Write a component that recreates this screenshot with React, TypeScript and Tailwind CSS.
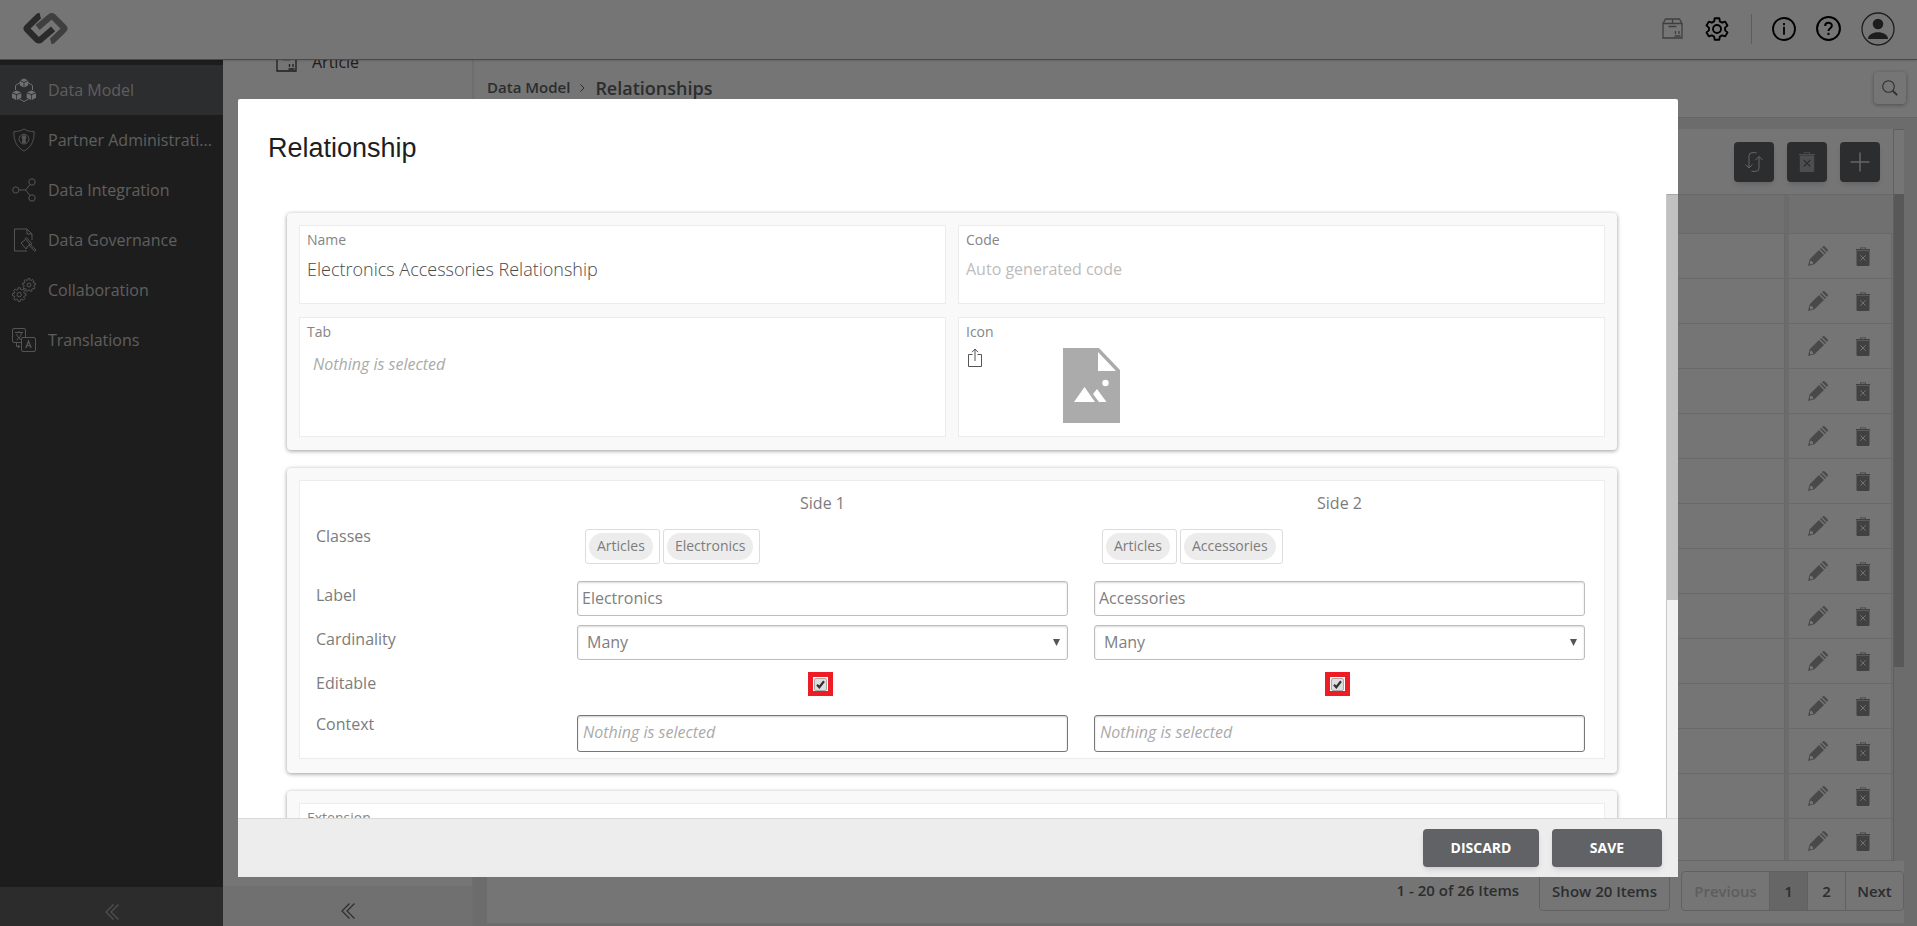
import type { ReactNode } from "react";
import { clsx } from "clsx";

interface IconProps {
    className?: string
}

const gearPoints = (cx: number, cy: number, outer: number, inner: number, teeth: number) => {
    const step = 360 / teeth
    const at = (r: number, deg: number) => {
        const a = (deg * Math.PI) / 180
        return `${(cx + r * Math.cos(a)).toFixed(2)},${(cy + r * Math.sin(a)).toFixed(2)}`
    }
    return Array.from({ length: teeth }, (_, i) => {
        const mid = -90 + i * step
        return [
            at(inner, mid - step * 0.34),
            at(outer, mid - step * 0.2),
            at(outer, mid + step * 0.2),
            at(inner, mid + step * 0.34),
        ].join(" ")
    }).join(" ")
}

const Logo = () => (
    <svg viewBox="0 0 136 94" className="w-[45px] h-[31px]" fill="none" strokeWidth="19" strokeLinejoin="round" aria-label="Logo">
        <path d="M84 86q4-1 8-5l31-30q4-4 0-8L92 12q-5-4-10 0L44 44" stroke="#8a8a8a" />
        <path d="M52 8q-4 1-8 5L13 43q-4 4 0 8l30 30q5 4 10 0l38-33" stroke="#5c5c5f" />
    </svg>
)

const CubesIcon = ({ className }: IconProps) => (
    <svg viewBox="0 0 24 24" className={className} fill="none" stroke="currentColor" strokeWidth="1">
        <path d="M8 4.500L3.500 7.500V12M16 4.500l4.500 3V12M7.500 21L12 23.500 16.500 21" />
        <g fill="currentColor" stroke="none">
            <path d="M12 .5l3.800 1.700L12 4 8.200 2.200zM7.800 3l3.800 1.800v4.600L7.800 7.300zM16.200 3l-3.800 1.800v4.600l3.800-2.100z" />
            <path d="M4.600 12.500L9 14.300l-4.400 1.900L.3 14.300zM0 15.200l4.200 1.900V22L0 19.800zM9.300 15.200L5 17.100V22l4.300-2.200z" />
            <path d="M19.400 12.500l4.300 1.800-4.300 1.900-4.400-1.900zM14.700 15.200l4.300 1.900V22l-4.300-2.200zM24 15.200l-4.200 1.900V22l4.200-2.200z" />
        </g>
    </svg>
)

const ShieldIcon = ({ className }: IconProps) => (
    <svg viewBox="0 0 24 26" className={className} fill="none" stroke="currentColor" strokeWidth="1">
        <path d="M12 1c3 2 7 3 11 3 0 9-2 16-11 21C3 20 1 13 1 4c4 0 8-1 11-3z" />
        <circle cx="12" cy="12" r="5.300" />
        <circle cx="12" cy="10.200" r="2.100" fill="currentColor" />
        <path d="M11 11.500h2l.8 4.500h-3.600z" fill="currentColor" />
    </svg>
)

const NodesIcon = ({ className }: IconProps) => (
    <svg viewBox="0 0 24 24" className={className} fill="none" stroke="currentColor" strokeWidth="1">
        <circle cx="3.800" cy="12" r="3.100" />
        <circle cx="20" cy="4" r="3.200" />
        <circle cx="20" cy="20" r="3.200" />
        <path d="M7 12h6.500L18 6.500M13.500 12l4.500 5.500" />
    </svg>
)

const GavelIcon = ({ className }: IconProps) => (
    <svg viewBox="0 0 24 24" className={className} fill="none" stroke="currentColor" strokeWidth="1">
        <path d="M15 23H2.500V1H15l5 5v6M15 1v5h5" />
        <path d="M14.500 9.500l-1.400 1 5.400 6.500 1.400-1.200zM13.700 11.300l-3.800 3.200M18 16.500l-3.800 3.200M10.400 13.600L9 15l5 6 1.500-1.300M16.500 17l6.500 6.300 1-1.400-6.200-5.700" />
    </svg>
)

const GearsIcon = ({ className }: IconProps) => (
    <svg viewBox="0 0 24 24" className={className} fill="none" stroke="currentColor" strokeWidth="1" strokeLinejoin="round">
        <polygon points={gearPoints(7.2, 16.6, 6.9, 5.2, 8)} />
        <circle cx="7.200" cy="16.600" r="2.200" />
        <polygon points={gearPoints(17, 7, 6.5, 5, 9)} />
        <circle cx="17" cy="7" r="2" />
    </svg>
)

const TranslateIcon = ({ className }: IconProps) => (
    <svg viewBox="0 0 24 24" className={className} fill="none" stroke="currentColor" strokeWidth="1">
        <path d="M13.500 9V2a1.500 1.500 0 00-1.500-1.500H2A1.500 1.500 0 00.5 2v11A1.500 1.500 0 002 14.500h7" />
        <rect x="9.500" y="9.500" width="14" height="14" rx="1.500" />
        <path d="M3 4.500h8M7 3v1.500M4.500 12c3-1.500 4.500-4 5-7.500M4.500 6c1 3 3 5 5 6M4.500 15v3.500h3M6 17l1.800 1.500L6 20" />
        <path d="M13.800 20l2.700-7 2.700 7M14.800 17.700h3.500" strokeWidth="1.300" />
    </svg>
)

const PackageIcon = ({ className }: IconProps) => (
    <svg viewBox="0 0 21 21" className={className} fill="none" stroke="currentColor" strokeWidth="1.300">
        <path d="M1 5.500h19V20H1zM1 5.500L3.500 1h14L20 5.500M10.500 1v4.500M6.500 8.500h8M12.500 18h6M13.500 13v3M17 13v3" />
    </svg>
)

const SettingsIcon = ({ className }: IconProps) => (
    <svg viewBox="0 0 24 24" className={className} fill="none" stroke="currentColor" strokeWidth="1.900" strokeLinejoin="round">
        <polygon points={gearPoints(12, 12, 11, 8.2, 6)} />
        <circle cx="12" cy="12" r="4" />
    </svg>
)

const InfoIcon = ({ className }: IconProps) => (
    <svg viewBox="0 0 24 24" className={className} fill="none" stroke="currentColor" strokeWidth="1.800">
        <circle cx="12" cy="12" r="11" />
        <path d="M12 9.800v8M12 6v2.200" />
    </svg>
)

const HelpIcon = ({ className }: IconProps) => (
    <svg viewBox="0 0 24 24" className={className} fill="none" stroke="currentColor" strokeWidth="1.900">
        <circle cx="12" cy="12" r="11" />
        <path d="M8.800 9.500c0-4 6.400-4 6.400-.2 0 2.500-3.200 2.400-3.200 5M12 16v2.200" />
    </svg>
)

const AvatarIcon = ({ className }: IconProps) => (
    <svg viewBox="0 0 34 34" className={className} fill="currentColor">
        <circle cx="17" cy="17" r="16" fill="none" stroke="currentColor" strokeWidth="1.300" />
        <circle cx="17" cy="12" r="5.300" />
        <path d="M7 27c0-9 20-9 20 0z" />
    </svg>
)

const SearchIcon = ({ className }: IconProps) => (
    <svg viewBox="0 0 16 16" className={className} fill="none" stroke="currentColor">
        <circle cx="6.500" cy="6.500" r="5.800" strokeWidth="1.100" />
        <path d="M10.800 10.800l4.400 4.400" strokeWidth="1.800" />
    </svg>
)

const SwapIcon = ({ className }: IconProps) => (
    <svg viewBox="0 0 20 20" className={className} fill="none" stroke="currentColor" strokeWidth="1">
        <path d="M12.500.7H8Q5 .7 5 4v12M1.500 12.500L5 16l3.500-3.500M7.500 19.300H12q3 0 3-3.300V4.500M11.500 8L15 4.500 18.500 8" />
    </svg>
)

const TrashIcon = ({ className }: IconProps) => (
    <svg viewBox="0 0 14 19" className={className}>
        <path d="M0 2h4V.5h6V2h4v1.500H0zM4.800 1.200V2h4.400v-.8zM.5 4h13v13.800q0 1.200-1.200 1.200H1.700Q.5 19 .5 17.800z" fill="currentColor" fillRule="evenodd" />
        <path d="M4.300 8.300l5.400 5.400M9.700 8.300l-5.400 5.400" stroke="#f8f8f8" strokeWidth="1" />
    </svg>
)

const BulkTrashIcon = ({ className }: IconProps) => (
    <svg viewBox="0 0 16 20" className={className}>
        <path d="M0 2h5V.3h6V2h5v1H0zM5.800 1v1h4.400V1zM.8 3.500h14.400v15q0 1.500-1.500 1.500H2.300q-1.500 0-1.500-1.500z" fill="#ababab" fillRule="evenodd" />
        <path d="M4.800 8l6.500 6.500M11.300 8l-6.500 6.500" stroke="#616266" strokeWidth="1.200" />
    </svg>
)

const PencilIcon = ({ className }: IconProps) => (
    <svg viewBox="0 0 20 20" className={className} fill="currentColor">
        <path d="M11 4l5 5-9.500 9.300L0 20l1.700-6.800zM1.900 15.500l.1 2.700 2.700-.1.500-1.500-1.700-1.800z" fillRule="evenodd" />
        <path d="M11.900 3.100l1.200-1.200 5 5-1.200 1.200zM14 1L15 .3q.9-.6 1.800.2l2.700 2.700q.8.900.2 1.800l-.7 1z" />
    </svg>
)

const CollapseIcon = ({ className }: IconProps) => (
    <svg viewBox="0 0 14 16" className={className} fill="none" stroke="currentColor" strokeWidth="1.200">
        <path d="M8.500.5L1 8l7.500 7.500M13.500.5L6 8l7.500 7.500" />
    </svg>
)

const UploadIcon = ({ className }: IconProps) => (
    <svg viewBox="0 0 16 20" className={className} fill="none" stroke="currentColor" strokeWidth="1">
        <path d="M5.500 6.500h-4v12h13v-12h-4M8 13V1M5 4.200L8 1l3 3.200" />
    </svg>
)

const ImageFileIcon = ({ className }: IconProps) => (
    <svg viewBox="0 0 57 75" className={className}>
        <path d="M0 0h36l21 22v53H0z" fill="#ababab" />
        <path d="M35 4v19h18zM11 54l10.500-15L32 54zM30 46l4-5 9.500 13H36z" fill="#fff" />
        <circle cx="42.500" cy="35" r="3.200" fill="#fff" />
    </svg>
)

const navItems = [
    { label: "Data Model", Icon: CubesIcon, active: true },
    { label: "Partner Administrati...", Icon: ShieldIcon },
    { label: "Data Integration", Icon: NodesIcon },
    { label: "Data Governance", Icon: GavelIcon },
    { label: "Collaboration", Icon: GearsIcon },
    { label: "Translations", Icon: TranslateIcon },
]

const sides = [
    { id: "side1", title: "Side 1", classes: ["Articles", "Electronics"], label: "Electronics" },
    { id: "side2", title: "Side 2", classes: ["Articles", "Accessories"], label: "Accessories" },
]

const rows = Array.from({ length: 14 }, (_, i) => i)

const Header = () => (
    <header className="relative z-10 h-[60px] shrink-0 flex items-center justify-between pl-[23px] pr-[22px] pb-0.5 bg-white border-b border-[#a0a0a0] shadow-sm">
        <Logo />
        <div className="flex items-center text-black">
            <button aria-label="Packages" className="text-[#888888]"><PackageIcon className="w-[21px] h-[21px]" /></button>
            <button aria-label="Settings" className="ml-[22px]"><SettingsIcon className="size-6" /></button>
            <span className="ml-[22px] w-px h-[30px] bg-[#c8c8c8]" />
            <button aria-label="Info" className="ml-5"><InfoIcon className="size-6" /></button>
            <button aria-label="Help" className="ml-5"><HelpIcon className="size-[25px]" /></button>
            <button aria-label="Account" className="ml-5 text-[#414141]"><AvatarIcon className="size-[34px]" /></button>
        </div>
    </header>
)

const Sidebar = () => (
    <nav className="w-[223px] shrink-0 flex flex-col justify-between bg-[#414141]">
        <ul className="pt-[5px]">
            {navItems.map(({ label, Icon, active }) => (
                <li key={label}>
                    <a href="#" className={clsx("flex items-center gap-3 h-[50px] pl-3 text-base text-[#cccccc]", active && "bg-[#616266]")}>
                        <Icon className={clsx("size-6 shrink-0", active ? "text-[#f4f4f4]" : "text-[#b8b8b8]")} />
                        <span className="whitespace-nowrap">{label}</span>
                    </a>
                </li>
            ))}
        </ul>
        <button aria-label="Collapse menu" className="h-[39px] flex items-center justify-center pt-2.5 bg-[#616161] text-[#b0b0b0]">
            <CollapseIcon className="w-3.5 h-4" />
        </button>
    </nav>
)

const EntityPanel = () => (
    <div className="w-[251px] shrink-0 flex flex-col justify-between bg-white border-r-2 border-[#efefef]">
        {/* Liste défilée : seule la fin de la ligne reste visible */}
        <div className="h-3 overflow-hidden flex flex-col justify-end pl-[53px]">
            <a href="#" className="flex items-end gap-[15px] text-[#414141]">
                <PackageIcon className="w-[21px] h-[21px] shrink-0" />
                <span className="pb-0.5 text-base leading-4">Article</span>
            </a>
        </div>
        <button aria-label="Collapse panel" className="h-10 flex items-center justify-center pt-2.5 bg-[#f4f4f4] text-[#616266]">
            <CollapseIcon className="w-3.5 h-4" />
        </button>
    </div>
)

const ToolButton = ({ label, children }: { label: string; children: ReactNode }) => (
    <button aria-label={label} className="size-10 rounded flex items-center justify-center bg-[#616266] text-[#dddddd] shadow-md">
        {children}
    </button>
)

const Grid = () => (
    <div className="flex-1 min-h-0 flex">
        <div className="flex-1 min-w-0 flex flex-col overflow-hidden bg-white">
            <div className="h-[65px] shrink-0 flex items-center justify-end gap-[13px] pr-[13px]">
                <ToolButton label="Reorder"><SwapIcon className="size-5" /></ToolButton>
                <ToolButton label="Delete selected"><BulkTrashIcon className="w-4 h-5" /></ToolButton>
                <ToolButton label="Add">
                    <svg viewBox="0 0 20 20" className="size-5" stroke="currentColor" strokeWidth="1.500"><path d="M10 .5v19M.5 10h19" /></svg>
                </ToolButton>
            </div>
            <div className="flex-1 min-h-0 overflow-hidden border-b border-[#dedede]">
                <table className="w-full table-fixed border-collapse">
                    <thead>
                        <tr className="h-[39px] bg-[#f4f4f4] border-y border-[#e4e4e4]">
                            <th />
                            <th className="w-[5px] bg-[#e9e9e9]" />
                            <th className="w-[102px]" />
                            <th className="w-0.5" />
                        </tr>
                    </thead>
                    <tbody>
                        {rows.map((row) => (
                            <tr key={row} className="h-[45px] border-b border-[#e6e6e6]">
                                <td className="border-r border-[#e0e0e0]" />
                                <td className="bg-[#ebebeb]" />
                                <td className="border-r border-[#e4e4e4]">
                                    <div className="flex items-center justify-between pl-[19px] pr-[21px]">
                                        <button aria-label="Edit" className="text-[#a0a0a0]"><PencilIcon className="size-5" /></button>
                                        <button aria-label="Delete" className="text-[#8e8e8e]"><TrashIcon className="w-3.5 h-[19px]" /></button>
                                    </div>
                                </td>
                                <td className="bg-[#f4f4f4]" />
                            </tr>
                        ))}
                    </tbody>
                </table>
            </div>
        </div>
        <div className="w-[11px] border-l border-t border-[#d0d0d0] bg-[#ebebeb]">
            <div className="h-16 bg-white" />
            <div className="h-[473px] bg-[#c1c1c1]" />
        </div>
    </div>
)

const Pagination = () => (
    <div className="h-[62px] shrink-0 flex items-start justify-end pt-2.5 bg-white text-[15px] leading-[38px] font-semibold text-[#616266]">
        <span className="mr-5">1 - 20 of 26 Items</span>
        <button className="h-10 mr-[11px] px-3 border border-[#d4d4d4] rounded">Show 20 Items</button>
        <div className="flex border border-[#d4d4d4] rounded overflow-hidden">
            <button className="w-[87px] text-[#cccccc]">Previous</button>
            <button className="w-[38px] border-l border-[#d4d4d4] bg-[#dedede]">1</button>
            <button className="w-[38px] border-l border-[#d4d4d4]">2</button>
            <button className="w-[58px] border-l border-[#d4d4d4]">Next</button>
        </div>
    </div>
)

const Workspace = () => (
    <main className="flex-1 min-w-0 flex flex-col bg-[#ebebeb]">
        <div className="h-[58px] shrink-0 flex items-center justify-between pl-[13px] pr-[11px] pb-0.5 bg-white border-b border-[#dddddd] text-[#616266]">
            <div className="flex items-center gap-2.5">
                <a href="#" className="text-[15px] font-semibold">Data Model</a>
                <svg viewBox="0 0 5 8" className="w-[5px] h-2" fill="none" stroke="currentColor"><path d="M.5.500L4 4 .5 7.500" /></svg>
                <h1 className="text-lg font-semibold">Relationships</h1>
            </div>
            <button aria-label="Search" className="size-8 rounded-sm flex items-center justify-center shadow-[0_1px_4px_rgba(0,0,0,0.35)]">
                <SearchIcon className="size-4" />
            </button>
        </div>
        <div className="flex-1 min-h-0 flex flex-col pt-[11px] px-[13px] pb-[3px]">
            <Grid />
            <Pagination />
        </div>
    </main>
)

const Card = ({ className, children }: { className: string; children: ReactNode }) => (
    <section className={clsx("shrink-0 bg-[#f9f9f9] rounded-sm p-3 shadow-[0_1px_4px_rgba(0,0,0,0.4)]", className)}>{children}</section>
)

const fieldBox = "bg-white border border-[#ececec] px-[7px]"
const fieldLabel = "block pt-1 text-sm leading-5 text-[#858585]"
const control = "w-full border border-[#bdbdbd] rounded-[3px] text-base text-[#808080] bg-white shadow-[inset_0_1px_2px_rgba(0,0,0,0.15)]"

const DetailsCard = () => (
    <Card className="grid grid-cols-2 grid-rows-[79px_120px] gap-x-3 gap-y-[13px] h-[237px]">
        <div className={fieldBox}>
            <label htmlFor="name" className={fieldLabel}>Name</label>
            <input id="name" defaultValue="Electronics Accessories Relationship" className="mt-1.5 w-full h-[26px] text-lg font-light text-[#4a4a4a] bg-transparent" />
        </div>
        <div className={fieldBox}>
            <label htmlFor="code" className={fieldLabel}>Code</label>
            <input id="code" placeholder="Auto generated code" className="mt-1.5 w-full h-[26px] text-base placeholder:text-[#bcbcbc] bg-transparent" />
        </div>
        <div className={fieldBox}>
            <label htmlFor="tab" className={fieldLabel}>Tab</label>
            <input id="tab" placeholder="Nothing is selected" className="mt-2.5 w-full h-6 pl-1.5 text-base italic placeholder:text-[#aaaaaa] bg-transparent" />
        </div>
        <div className={fieldBox}>
            <span className={fieldLabel}>Icon</span>
            <div className="flex items-start pl-px pt-1.5">
                <button aria-label="Upload icon" className="text-[#555555]"><UploadIcon className="w-4 h-5" /></button>
                <ImageFileIcon className="w-[57px] h-[75px] ml-20" />
            </div>
        </div>
    </Card>
)

const SideColumn = ({ side }: { side: (typeof sides)[number] }) => (
    <div className="flex-1 min-w-0 flex flex-col">
        <h3 className="text-center leading-6">{side.title}</h3>
        <div className="flex gap-[3px] mt-3.5 ml-2">
            {side.classes.map((name) => (
                <span key={name} className="h-[35px] flex items-center border border-[#dcdcdc] rounded-[3px] pl-[3px] pr-1.5">
                    <span className="h-[27px] px-2 rounded-full bg-[#ececec] text-sm leading-[25px]">{name}</span>
                </span>
            ))}
        </div>
        <input id={`${side.id}-label`} aria-label="Label" defaultValue={side.label} className={clsx(control, "mt-[17px] h-[35px] pl-1 pb-0.5")} />
        <div className="grid mt-[9px]">
            <select aria-label="Cardinality" className={clsx(control, "col-start-1 row-start-1 h-[35px] pl-[9px] pb-0.5 appearance-none")}>
                <option>Many</option>
                <option>One</option>
            </select>
            <svg viewBox="0 0 7 7" className="col-start-1 row-start-1 self-center justify-self-end mr-2 size-[7px] pointer-events-none" fill="#555555"><path d="M0 0h7L3.500 7z" /></svg>
        </div>
        <div className="grid place-items-center self-center mt-3 mr-1 w-[25px] h-6 bg-white border-[5px] border-[#ee1c24]">
            <input type="checkbox" aria-label="Editable" defaultChecked className="col-start-1 row-start-1 size-[13px] appearance-none border border-[#aaaaaa] rounded-xs bg-[#dedede]" />
            <svg viewBox="0 0 9 9" className="col-start-1 row-start-1 size-[9px] pointer-events-none" fill="none" stroke="#333333" strokeWidth="2.200"><path d="M1 4.800l2.300 2.400L8 1.200" /></svg>
        </div>
        <input aria-label="Context" placeholder="Nothing is selected" className="mt-[19px] w-full h-[37px] px-[5px] pb-1 border border-[#777777] rounded-[3px] text-base italic placeholder:text-[#aaaaaa] shadow-[inset_0_1px_2px_rgba(0,0,0,0.2)]" />
    </div>
)

const SidesCard = () => (
    <Card className="h-[305px]">
        <div className="h-[279px] flex gap-[26px] bg-white border border-[#ececec] pl-4 pr-[19px] pt-2.5 text-base text-[#7c7c7c]">
            <div className="w-[235px] shrink-0 flex flex-col leading-5">
                <span className="mt-[35px]">Classes</span>
                <span className="mt-[39px]">Label</span>
                <span className="mt-6">Cardinality</span>
                <span className="mt-6">Editable</span>
                <span className="mt-[21px]">Context</span>
            </div>
            {sides.map((side) => <SideColumn key={side.id} side={side} />)}
        </div>
    </Card>
)

const RelationshipDialog = () => (
    <div className="fixed inset-0 z-20 flex pt-[99px] pb-[49px] pl-[238px] pr-[239px] bg-black/54">
        <div role="dialog" aria-label="Relationship" className="flex-1 min-w-0 flex flex-col bg-white rounded-t-xs">
            <h2 className="h-[95px] shrink-0 pl-[30px] pt-8 text-[27px] leading-[34px] text-[#1e1e1e] font-['Liberation_Sans',sans-serif]">Relationship</h2>
            <div className="flex-1 min-h-0 flex">
                <div className="flex-1 min-w-0 overflow-hidden flex flex-col gap-[18px] pt-[19px] pl-[49px] pr-[49px]">
                    <DetailsCard />
                    <SidesCard />
                    <Card className="h-[120px]">
                        <div className={clsx(fieldBox, "h-[79px]")}>
                            <label htmlFor="extension" className={fieldLabel}>Extension</label>
                            <input id="extension" className="w-full h-[26px] bg-transparent" />
                        </div>
                    </Card>
                </div>
                <div className="w-3 shrink-0 border-l border-[#c8c8c8] bg-[#f1f1f1]">
                    <div className="h-[406px] bg-[#c1c1c1] border-t border-[#a8a8a8]" />
                </div>
            </div>
            <footer className="h-[59px] shrink-0 flex items-center justify-end gap-[13px] pr-4 bg-[#ededed] border-t border-[#dadada] text-sm font-bold text-white">
                <button className="w-[116px] h-[38px] rounded-sm bg-[#616266] shadow-md">DISCARD</button>
                <button className="w-[110px] h-[38px] rounded-sm bg-[#616266] shadow-md">SAVE</button>
            </footer>
        </div>
    </div>
)

export default function App() {
    return (
        <div className="h-screen flex flex-col overflow-hidden bg-white font-['Open_Sans',sans-serif]">
            <Header />
            <div className="flex-1 min-h-0 flex">
                <Sidebar />
                <EntityPanel />
                <Workspace />
            </div>
            <RelationshipDialog />
        </div>
    )
}
